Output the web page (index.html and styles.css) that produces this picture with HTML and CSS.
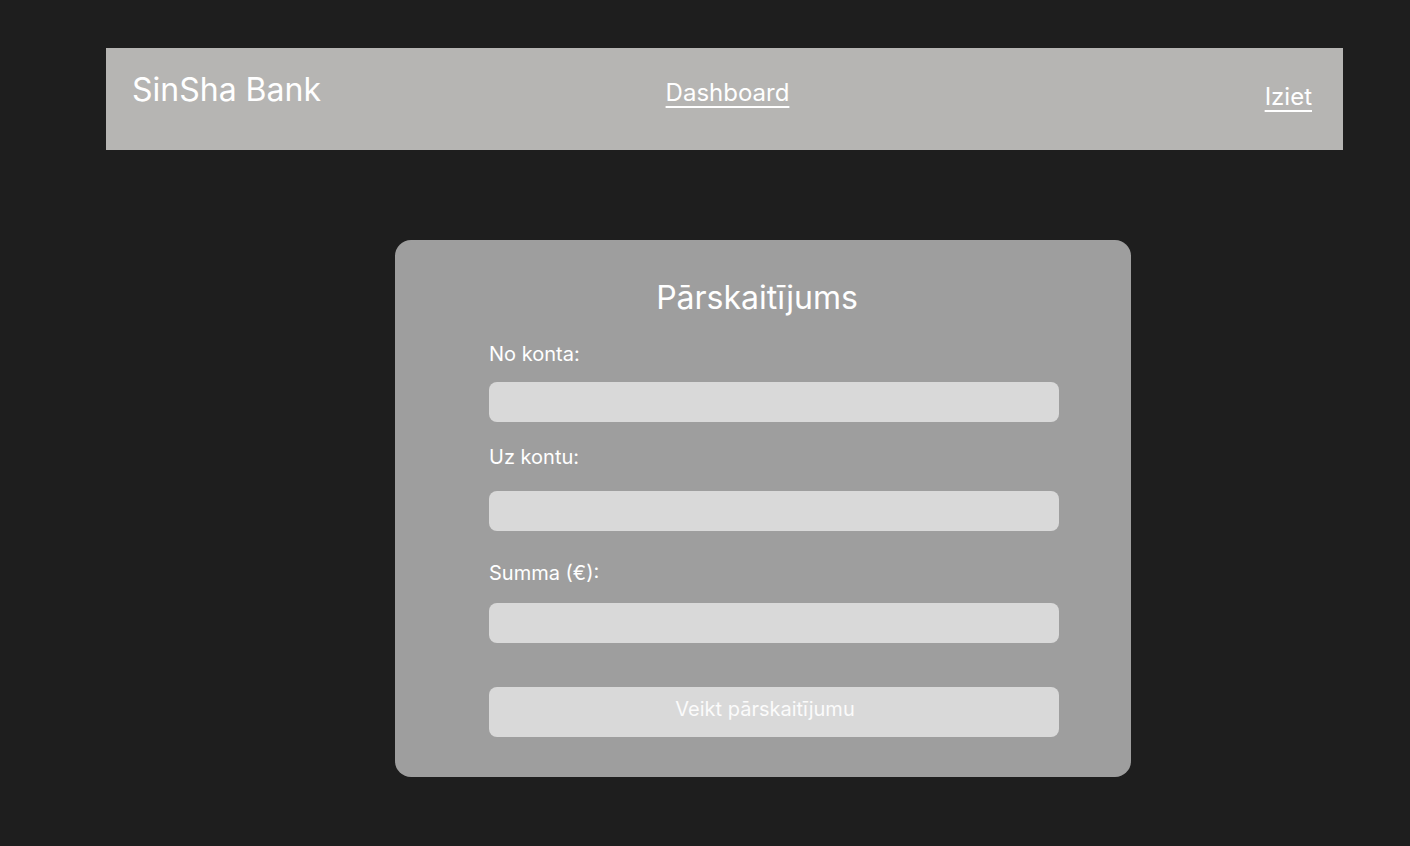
FILE: index.html
```html
<!DOCTYPE html>
<html lang="lv">
<head>
<meta charset="utf-8">
<title>SinSha Bank – Pārskaitījums</title>
<link rel="stylesheet" href="styles.css">
</head>
<body>
<header class="topbar">
  <div class="brand">SinSha Bank</div>
  <nav class="nav"><a href="#" class="nav-link">Dashboard</a></nav>
  <a href="#" class="logout">Iziet</a>
</header>

<main class="page">
  <section class="card">
    <h1 class="card-title">Pārskaitījums</h1>
    <form class="form">
      <label class="label label-from" for="from">No konta:</label>
      <input class="field field-from" id="from" type="text">
      <label class="label label-to" for="to">Uz kontu:</label>
      <input class="field field-to" id="to" type="text">
      <label class="label label-sum" for="sum">Summa (€):</label>
      <input class="field field-sum" id="sum" type="text">
      <button class="submit" type="button">Veikt pārskaitījumu</button>
    </form>
  </section>
</main>
</body>
</html>
```

FILE: styles.css
```css
* {
  box-sizing: border-box;
}

html, body {
  margin: 0;
  padding: 0;
}

body {
  background: #1e1e1e;
  font-family: Inter, "Noto Sans", "Liberation Sans", sans-serif;
  color: #ffffff;
  padding: 48px 67px 0 106px;
  min-height: 846px;
}

/* top bar */
.topbar {
  background: #b6b5b3;
  height: 102px;
  display: grid;
  grid-template-columns: 1fr auto 1fr;
  align-items: start;
  padding: 0 30px 0 26px;
}

.brand {
  font-size: 32px;
  line-height: 39px;
  margin-top: 22px;
  justify-self: start;
}

.nav {
  margin-top: 30px;
  padding-left: 10px;
}

.nav-link,
.logout {
  color: #ffffff;
  font-size: 24px;
  line-height: 29px;
  text-decoration: underline;
  text-underline-offset: 5px;
  text-decoration-thickness: 2px;
}

.logout {
  justify-self: end;
  margin-top: 34px;
  margin-right: 1px;
}

/* transfer card */
.page {
  display: flex;
  padding: 90px 0 60px 289px;
}

.card {
  width: 736px;
  background: #9e9e9e;
  border-radius: 16px;
  padding: 38px 72px 40px 94px;
}

.card-title {
  margin: 0 0 25px -8px;
  font-size: 32px;
  line-height: 39px;
  font-weight: 400;
  text-align: center;
  padding-right: 26px;
}

.form {
  display: flex;
  flex-direction: column;
}

.label {
  font-size: 20px;
  line-height: 24px;
}

.field {
  height: 40px;
  border: none;
  border-radius: 8px;
  background: #d9d9d9;
  font: inherit;
  outline: none;
}

.label-from { margin-bottom: 16px; }
.field-from { margin-bottom: 23px; }
.label-to { margin-bottom: 22px; }
.field-to { margin-bottom: 30px; }
.label-sum { margin-bottom: 18px; }
.field-sum { margin-bottom: 44px; }

.submit {
  height: 50px;
  border: none;
  border-radius: 8px;
  background: #d9d9d9;
  color: #fbfbfb;
  font-family: inherit;
  font-size: 20px;
  padding: 0 18px 6px 0;
}
```
